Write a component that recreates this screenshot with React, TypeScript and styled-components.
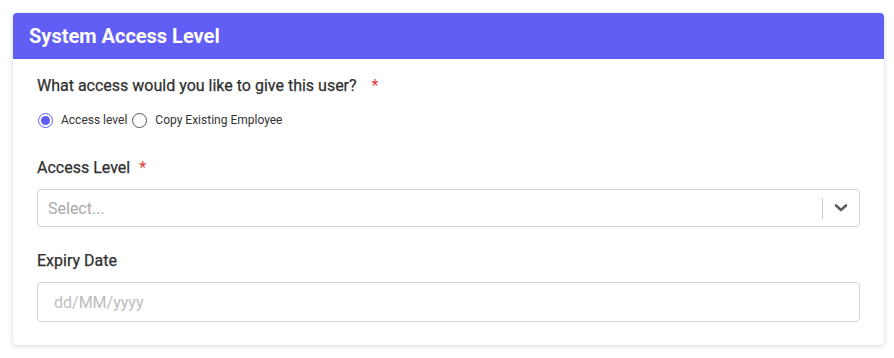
import React from 'react';
import styled, { createGlobalStyle } from 'styled-components';

const Global = createGlobalStyle`
  body {
    margin: 0;
    background: #fff;
    font-family: Roboto, "Liberation Sans", Arial, sans-serif;
  }
`;

const Page = styled.div`
  padding: 13px 10px 13px 13px;
`;

const Card = styled.section`
  width: 871px;
  background: #fff;
  border-radius: 4px;
  box-shadow: 0 1px 5px rgba(0, 0, 0, 0.16);
  overflow: hidden;
`;

const Header = styled.header`
  height: 46px;
  background: #615ef5;
  display: flex;
  align-items: center;
  padding: 0 16px;
  color: #fff;
  font-size: 20px;
  font-weight: 700;
`;

const Body = styled.div`
  padding: 17px 24px 23px 24px;
`;

const Label = styled.div<{ mt?: number }>`
  font-size: 16px;
  font-weight: 400;
  color: #2f2f2f;
  line-height: 20px;
  margin-top: ${p => p.mt ?? 0}px;
  -webkit-text-stroke: 0.25px #2f2f2f;
`;

const Req = styled.span<{ gap?: number }>`
  color: #e53935;
  margin-left: ${p => p.gap ?? 6}px;
  -webkit-text-stroke: 0;
`;

const RadioRow = styled.div`
  display: flex;
  align-items: center;
  height: 20px;
  margin-top: 14px;
  font-size: 12px;
  color: #333;
`;

const RadioItem = styled.label`
  display: flex;
  align-items: center;
  margin-right: 4px;
`;

const RadioDot = styled.span<{ checked?: boolean }>`
  width: 15px;
  height: 15px;
  box-sizing: border-box;
  border-radius: 50%;
  border: 1.5px solid ${p => (p.checked ? '#615ef5' : '#555')};
  display: inline-flex;
  align-items: center;
  justify-content: center;
  margin: 0 8px 0 1px;
  &::after {
    content: '';
    display: ${p => (p.checked ? 'block' : 'none')};
    width: 9px;
    height: 9px;
    border-radius: 50%;
    background: #615ef5;
  }
`;

const Field = styled.div<{ h: number; pl: number }>`
  margin-top: 11px;
  height: ${p => p.h}px;
  box-sizing: border-box;
  border: 1px solid #cdd5df;
  border-radius: 4px;
  display: flex;
  align-items: center;
  padding-left: ${p => p.pl}px;
`;

const Placeholder = styled.span<{ light?: boolean }>`
  flex: 1;
  font-size: 16px;
  color: ${p => (p.light ? '#bdbdbd' : '#a8a8a8')};
`;

const Indicators = styled.div`
  display: flex;
  align-items: center;
  height: 100%;
`;

const Sep = styled.span`
  width: 1px;
  height: 21px;
  background: #cccccc;
`;

const Chevron = styled.span`
  width: 36px;
  display: flex;
  justify-content: center;
  color: #5f5f5f;
`;

export default function App() {
  return (
    <>
      <Global />
      <Page>
        <Card>
          <Header>System Access Level</Header>
          <Body>
            <Label>
              What access would you like to give this user?<Req gap={15}>*</Req>
            </Label>
            <RadioRow>
              <RadioItem>
                <RadioDot checked />
                Access level
              </RadioItem>
              <RadioItem>
                <RadioDot />
                Copy Existing Employee
              </RadioItem>
            </RadioRow>
            <Label mt={28}>
              Access Level<Req gap={9}>*</Req>
            </Label>
            <Field h={38} pl={10}>
              <Placeholder>Select...</Placeholder>
              <Indicators>
                <Sep />
                <Chevron>
                  <svg width="14" height="10" viewBox="0 0 14 10" fill="none">
                    <polyline
                      points="2,2.5 7,7 12,2.5"
                      stroke="currentColor"
                      strokeWidth="2.6"
                      strokeLinecap="round"
                      strokeLinejoin="round"
                    />
                  </svg>
                </Chevron>
              </Indicators>
            </Field>
            <Label mt={24}>Expiry Date</Label>
            <Field h={40} pl={16}>
              <Placeholder light>dd/MM/yyyy</Placeholder>
            </Field>
          </Body>
        </Card>
      </Page>
    </>
  );
}
